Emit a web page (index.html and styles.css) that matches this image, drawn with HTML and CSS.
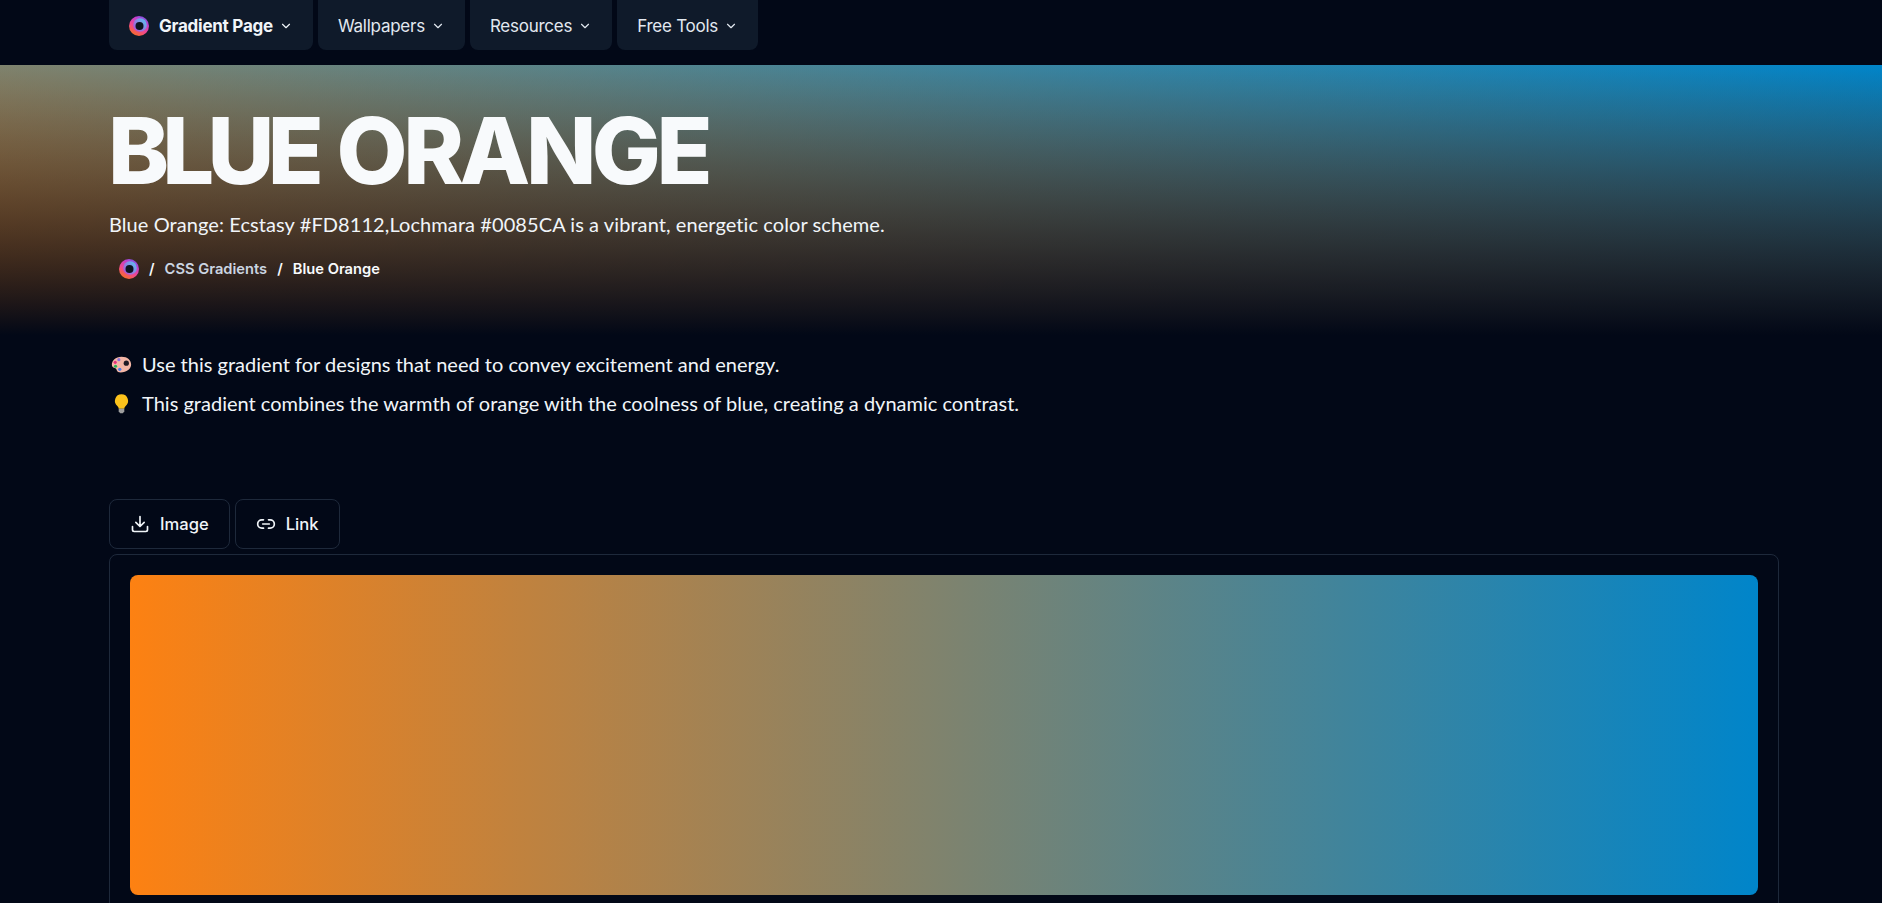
FILE: index.html
```html
<!DOCTYPE html>
<html lang="en">
<head>
<meta charset="utf-8">
<title>Blue Orange</title>
<link rel="stylesheet" href="styles.css">
</head>
<body>
<svg class="defs" width="0" height="0" aria-hidden="true">
  <defs>
    <linearGradient id="logo-grad" x1="0.2" y1="1" x2="0.8" y2="0">
      <stop offset="0" stop-color="#f97316"/>
      <stop offset="0.4" stop-color="#f0478f"/>
      <stop offset="0.75" stop-color="#c03fd0"/>
      <stop offset="1" stop-color="#6d5be8"/>
    </linearGradient>
    <linearGradient id="logo-inner" x1="0" y1="1" x2="1" y2="0">
      <stop offset="0" stop-color="#c03fd0"/>
      <stop offset="1" stop-color="#4fd0f5"/>
    </linearGradient>
    <symbol id="logo" viewBox="0 0 20 20">
      <circle cx="10" cy="10" r="10" fill="url(#logo-grad)"/>
      <circle cx="11" cy="9" r="6.800" fill="url(#logo-inner)"/>
      <circle cx="10.500" cy="10" r="4" fill="#0c1420"/>
    </symbol>
    <symbol id="chev" viewBox="0 0 24 24">
      <path d="M6 9l6 6 6-6" fill="none" stroke="currentColor" stroke-width="2" stroke-linecap="round" stroke-linejoin="round"/>
    </symbol>
  </defs>
</svg>
<header class="nav">
  <div class="wrap nav-row">
    <a class="nav-btn brand"><svg class="logo"><use href="#logo"/></svg>Gradient Page<svg class="chev"><use href="#chev"/></svg></a>
    <a class="nav-btn">Wallpapers<svg class="chev"><use href="#chev"/></svg></a>
    <a class="nav-btn">Resources<svg class="chev"><use href="#chev"/></svg></a>
    <a class="nav-btn">Free Tools<svg class="chev"><use href="#chev"/></svg></a>
  </div>
</header>
<section class="hero">
  <div class="wrap">
    <h1><span class="tight">BLUE</span> ORANGE</h1>
    <p class="sub">Blue Orange: Ecstasy #FD8112,Lochmara #0085CA is a vibrant, energetic color scheme.</p>
    <nav class="crumbs">
      <svg class="logo"><use href="#logo"/></svg>
      <span class="sep">/</span>
      <a class="crumb">CSS Gradients</a>
      <span class="sep">/</span>
      <span class="current">Blue Orange</span>
    </nav>
  </div>
</section>
<main class="wrap main">
  <p class="tip">
    <svg class="emoji" viewBox="0 0 24 24" aria-hidden="true">
      <path d="M12 3C5 3 1 7.500 1 12c0 4 3 3.500 4.500 4.500S6 21 11 21c7 0 12-4 12-9 0-5-4-9-11-9z" fill="#f4b6a6"/>
      <circle cx="17.500" cy="10.500" r="3" fill="#1f1a24"/>
      <circle cx="9" cy="6.500" r="1.800" fill="#8b6fd8"/>
      <circle cx="4.800" cy="9.500" r="1.800" fill="#e5317e"/>
      <circle cx="5.200" cy="14" r="1.800" fill="#22b455"/>
      <circle cx="10" cy="17.500" r="1.900" fill="#4a7ce8"/>
    </svg>
    <span>Use this gradient for designs that need to convey excitement and energy.</span>
  </p>
  <p class="tip">
    <svg class="emoji" viewBox="0 0 24 24" aria-hidden="true">
      <path d="M12 1.500a7.500 7.500 0 0 0-4.500 13.500c1 1 1.200 2 1.300 3h6.400c.1-1 .3-2 1.300-3A7.500 7.500 0 0 0 12 1.500z" fill="#fcc21b"/>
      <path d="M8.800 18h6.400v3.200l-1.700 1.800h-3l-1.700-1.800z" fill="#9e9e9e"/>
    </svg>
    <span>This gradient combines the warmth of orange with the coolness of blue, creating a dynamic contrast.</span>
  </p>
  <div class="actions">
    <button class="act">
      <svg class="act-icon" viewBox="0 0 24 24"><path d="M21 15v4a2 2 0 0 1-2 2H5a2 2 0 0 1-2-2v-4M7 10l5 5 5-5M12 15V3" fill="none" stroke="currentColor" stroke-width="2" stroke-linecap="round" stroke-linejoin="round"/></svg>
      Image
    </button>
    <button class="act">
      <svg class="act-icon" viewBox="0 0 24 24"><path d="M9 17H7A5 5 0 0 1 7 7h2M15 7h2a5 5 0 1 1 0 10h-2M8 12h8" fill="none" stroke="currentColor" stroke-width="2" stroke-linecap="round" stroke-linejoin="round"/></svg>
      Link
    </button>
  </div>
  <div class="card">
    <div class="swatch"></div>
  </div>
</main>
</body>
</html>
```
FILE: styles.css
```css
* { box-sizing: border-box; }
html, body { margin: 0; height: 100%; overflow: hidden; }
body {
  background: #020817;
  color: #f8fafc;
  font-family: "Lato", "Liberation Sans", sans-serif;
}
.defs { position: absolute; }
.wrap { width: 1664px; margin-left: 109px; }
.nav { height: 65px; }
.nav-row { display: flex; gap: 5px; height: 50px; }
.nav-btn {
  display: flex;
  align-items: center;
  padding: 1px 20px 0;
  background: #0f1a2a;
  border-radius: 0 0 8px 8px;
  color: #e2e8f0;
  font-family: "Inter", sans-serif;
  font-size: 17px;
  font-weight: 400;
  letter-spacing: -0.25px;
}
.nav-btn.brand { font-weight: 700; color: #f1f5f9; }
.logo { width: 20px; height: 20px; flex: none; margin-right: 10px; }
.chev { width: 14px; height: 14px; margin-left: 6px; flex: none; }
.hero {
  height: 270px;
  padding-top: 36px;
  background:
    linear-gradient(to bottom, rgba(2, 8, 23, 0), #020817),
    linear-gradient(to top right, #FD8112, #0085CA);
}
h1 {
  margin: 0 0 0 -1px;
  font-family: "Inter", sans-serif;
  font-size: 92px;
  line-height: 100px;
  font-weight: 800;
  letter-spacing: -4.5px;
  word-spacing: 4px;
}
.tight { letter-spacing: -6.800px; }
.sub { margin: 8px 0 0; font-size: 20px; line-height: 30px; letter-spacing: 0.08px; color: #f1f5f9; }
.crumbs { display: flex; align-items: center; margin-top: 16px; padding-left: 10px; font-family: "Inter", sans-serif; font-size: 14.7px; font-weight: 600; height: 28px; }
.crumbs .logo { margin-right: 10px; }
.sep { margin-right: 10px; }
.crumb { color: #cbd5e1; margin-right: 10px; }
.current { color: #f8fafc; }
.main { padding-top: 15px; width: 1670px; }
.tip { display: flex; align-items: center; gap: 10px; margin: 0 0 11px; font-size: 20px; line-height: 28px; letter-spacing: 0.01px; color: #f1f5f9; }
.emoji { width: 21px; height: 21px; flex: none; margin-left: 2px; }
.actions { display: flex; gap: 5px; margin-top: 82px; }
.act {
  display: flex;
  align-items: center;
  gap: 10px;
  height: 50px;
  padding: 0 20px;
  background: transparent;
  border: 1px solid #1e293b;
  border-radius: 8px;
  color: #f1f5f9;
  font-family: "Inter", sans-serif;
  font-size: 16.6px;
  font-weight: 500;
}
.act-icon { width: 20px; height: 20px; flex: none; }
.card {
  margin-top: 5px;
  padding: 20px;
  height: 600px;
  border: 1px solid #1e293b;
  border-radius: 8px;
}
.swatch {
  height: 320px;
  border-radius: 8px;
  background: linear-gradient(to right, #FD8112, #0085CA);
}
```
